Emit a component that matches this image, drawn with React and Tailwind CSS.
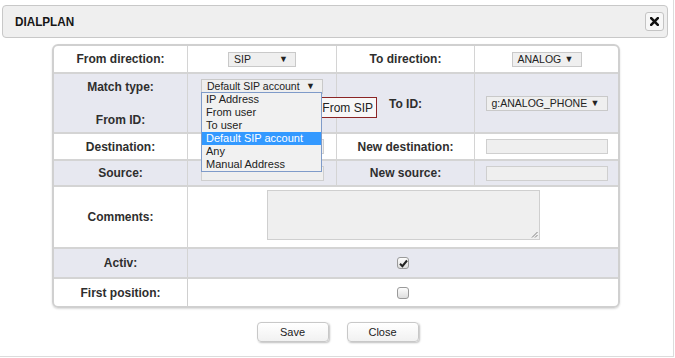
import React from "react";

const Sel = ({ text, w, cls = "" }) => (
  <div
    className={`flex items-center justify-between h-[15px] border border-[#c9c9c9] bg-[#efefef] pl-[5px] pr-[7px] text-[10.5px] leading-none text-[#222] ${cls}`}
    style={{ width: w }}
  >
    <span>{text}</span>
    <span className="text-[9px]">▼</span>
  </div>
);

const Input = ({ w = 123 }) => (
  <div className="h-[15px] border border-[#cfcfcf] bg-[#efefef]" style={{ width: w }} />
);

const Box = ({ checked }) => (
  <div className="w-[12px] h-[12px] rounded-[3px] border border-[#9a9a9a] bg-gradient-to-b from-[#fdfdfd] to-[#dedede] flex items-center justify-center">
    {checked && (
      <svg width="9" height="9" viewBox="0 0 9 9">
        <path d="M1 4.8 L3.4 7.2 L8 1.5" fill="none" stroke="#222" strokeWidth="2" />
      </svg>
    )}
  </div>
);

const L = ({ children, cls = "" }) => (
  <div className={`flex items-center justify-center border-r border-[#cfcfcf] text-[12px] font-bold text-[#2e2e2e] ${cls}`}>
    {children}
  </div>
);

const C = ({ children, cls = "" }) => (
  <div className={`flex items-center justify-center border-r border-[#cfcfcf] ${cls}`}>{children}</div>
);

export default function App() {
  const lav = "bg-[#e7e8f0]";
  const rowB = "border-b-2 border-[#d4d4d4]";
  return (
    <div
      className="relative w-[674px] h-[357px] bg-white border-r border-b border-[#dcdcdc]"
      style={{ fontFamily: "Arial, 'Liberation Sans', sans-serif" }}
    >
      <div className="pt-[5px] pl-[2px]">
        <div className="w-[666px] h-[33px] rounded-[4px] border border-[#c8c8c8] bg-[#efefef] flex items-center justify-between pl-[12px] pr-[3px]">
          <span className="inline-block origin-left scale-x-[0.9] text-[13px] font-semibold text-[#151515]">
            DIALPLAN
          </span>
          <div className="w-[19px] h-[19px] rounded-[3px] border border-[#c4c4c4] bg-[#f7f7f7] flex items-center justify-center">
            <svg width="9" height="9" viewBox="0 0 9 9">
              <path d="M1.2 1.2 L7.8 7.8 M7.8 1.2 L1.2 7.8" stroke="#111" strokeWidth="2.6" strokeLinecap="square" />
            </svg>
          </div>
        </div>
      </div>

      <div className="ml-[52px] mt-[6px] w-[568px] rounded-[6px] border-2 border-[#d0d0d0] shadow-[0_1px_2px_rgba(0,0,0,0.15)] overflow-visible">
        <div className="grid grid-cols-[134px_149px_138px_143px]">
          {/* row 1 */}
          <L cls={`h-[28px] ${rowB}`}>From direction:</L>
          <C cls={`h-[28px] ${rowB}`}><Sel text="SIP" w={68} /></C>
          <L cls={`h-[28px] ${rowB}`}>To direction:</L>
          <C cls={`h-[28px] ${rowB} border-r-0`}><Sel text="ANALOG" w={70} /></C>

          {/* row 2 */}
          <div className={`h-[60px] ${rowB} ${lav} border-r border-[#cfcfcf] flex flex-col items-center justify-between pt-[4px] pb-[3px] text-[12px] font-bold text-[#2e2e2e]`}>
            <span>Match type:</span>
            <span>From ID:</span>
          </div>
          <div className={`h-[60px] ${rowB} ${lav} border-r border-[#cfcfcf] flex justify-center pt-[5px]`}>
            <div className="relative">
              <Sel text="Default SIP account" w={122} />
              <div className="absolute left-[95px] top-[18px] w-[81px] h-[21px] border border-[#8b2525] bg-[#f7f7f7] flex items-center justify-end pr-[3px] text-[12px] text-[#222] z-10">
                From SIP
              </div>
              <div className="absolute left-0 top-[13px] w-[121px] border border-[#7f9bc9] bg-[#f1f1f1] text-[11px] leading-[13px] text-[#222] z-20">
                {["IP Address", "From user", "To user", "Default SIP account", "Any", "Manual Address"].map((o) => (
                  <div
                    key={o}
                    className={`pl-[4px] h-[13px] ${o === "Default SIP account" ? "bg-[#3399ff] text-white" : ""}`}
                  >
                    {o}
                  </div>
                ))}
              </div>
            </div>
          </div>
          <L cls={`h-[60px] ${rowB} ${lav}`}><span className="pt-[2px]">To ID:</span></L>
          <C cls={`h-[60px] ${rowB} ${lav} border-r-0`}><Sel text="g:ANALOG_PHONE" w={122} /></C>

          {/* row 3 */}
          <L cls={`h-[27px] ${rowB}`}>Destination:</L>
          <C cls={`h-[27px] ${rowB}`}><Input /></C>
          <L cls={`h-[27px] ${rowB}`}>New destination:</L>
          <C cls={`h-[27px] ${rowB} border-r-0`}><Input w={122} /></C>

          {/* row 4 */}
          <L cls={`h-[26px] ${rowB} ${lav}`}>Source:</L>
          <C cls={`h-[26px] ${rowB} ${lav}`}><Input /></C>
          <L cls={`h-[26px] ${rowB} ${lav}`}>New source:</L>
          <C cls={`h-[26px] ${rowB} ${lav} border-r-0`}><Input w={122} /></C>

          {/* row 5 */}
          <L cls={`h-[62px] ${rowB}`}>Comments:</L>
          <div className={`col-span-3 h-[62px] ${rowB} flex justify-center pt-[3px]`}>
            <div className="relative w-[273px] h-[50px] border border-[#cfcfcf] bg-[#efefef]">
              <svg className="absolute right-[1px] bottom-[1px]" width="7" height="7" viewBox="0 0 7 7">
                <path d="M6.5 1 L1 6.5 M6.5 4 L4 6.5" stroke="#777" strokeWidth="0.9" />
              </svg>
            </div>
          </div>

          {/* row 6 */}
          <L cls={`h-[30px] ${rowB} ${lav}`}>Activ:</L>
          <div className={`col-span-3 h-[30px] ${rowB} ${lav} flex items-center justify-center`}>
            <Box checked />
          </div>

          {/* row 7 */}
          <L cls="h-[27px]">First position:</L>
          <div className="col-span-3 h-[27px] flex items-center justify-center">
            <Box />
          </div>
        </div>
      </div>

      <div className="flex justify-center gap-[18px] mt-[14px] pl-[2px]">
        {["Save", "Close"].map((b) => (
          <div
            key={b}
            className="w-[72px] h-[20px] rounded-[4px] border border-[#c8c8c8] bg-gradient-to-b from-white to-[#f1f1f1] shadow-[1px_1px_2px_rgba(0,0,0,0.25)] flex items-center justify-center text-[11px] text-[#222]"
          >
            {b}
          </div>
        ))}
      </div>
    </div>
  );
}
